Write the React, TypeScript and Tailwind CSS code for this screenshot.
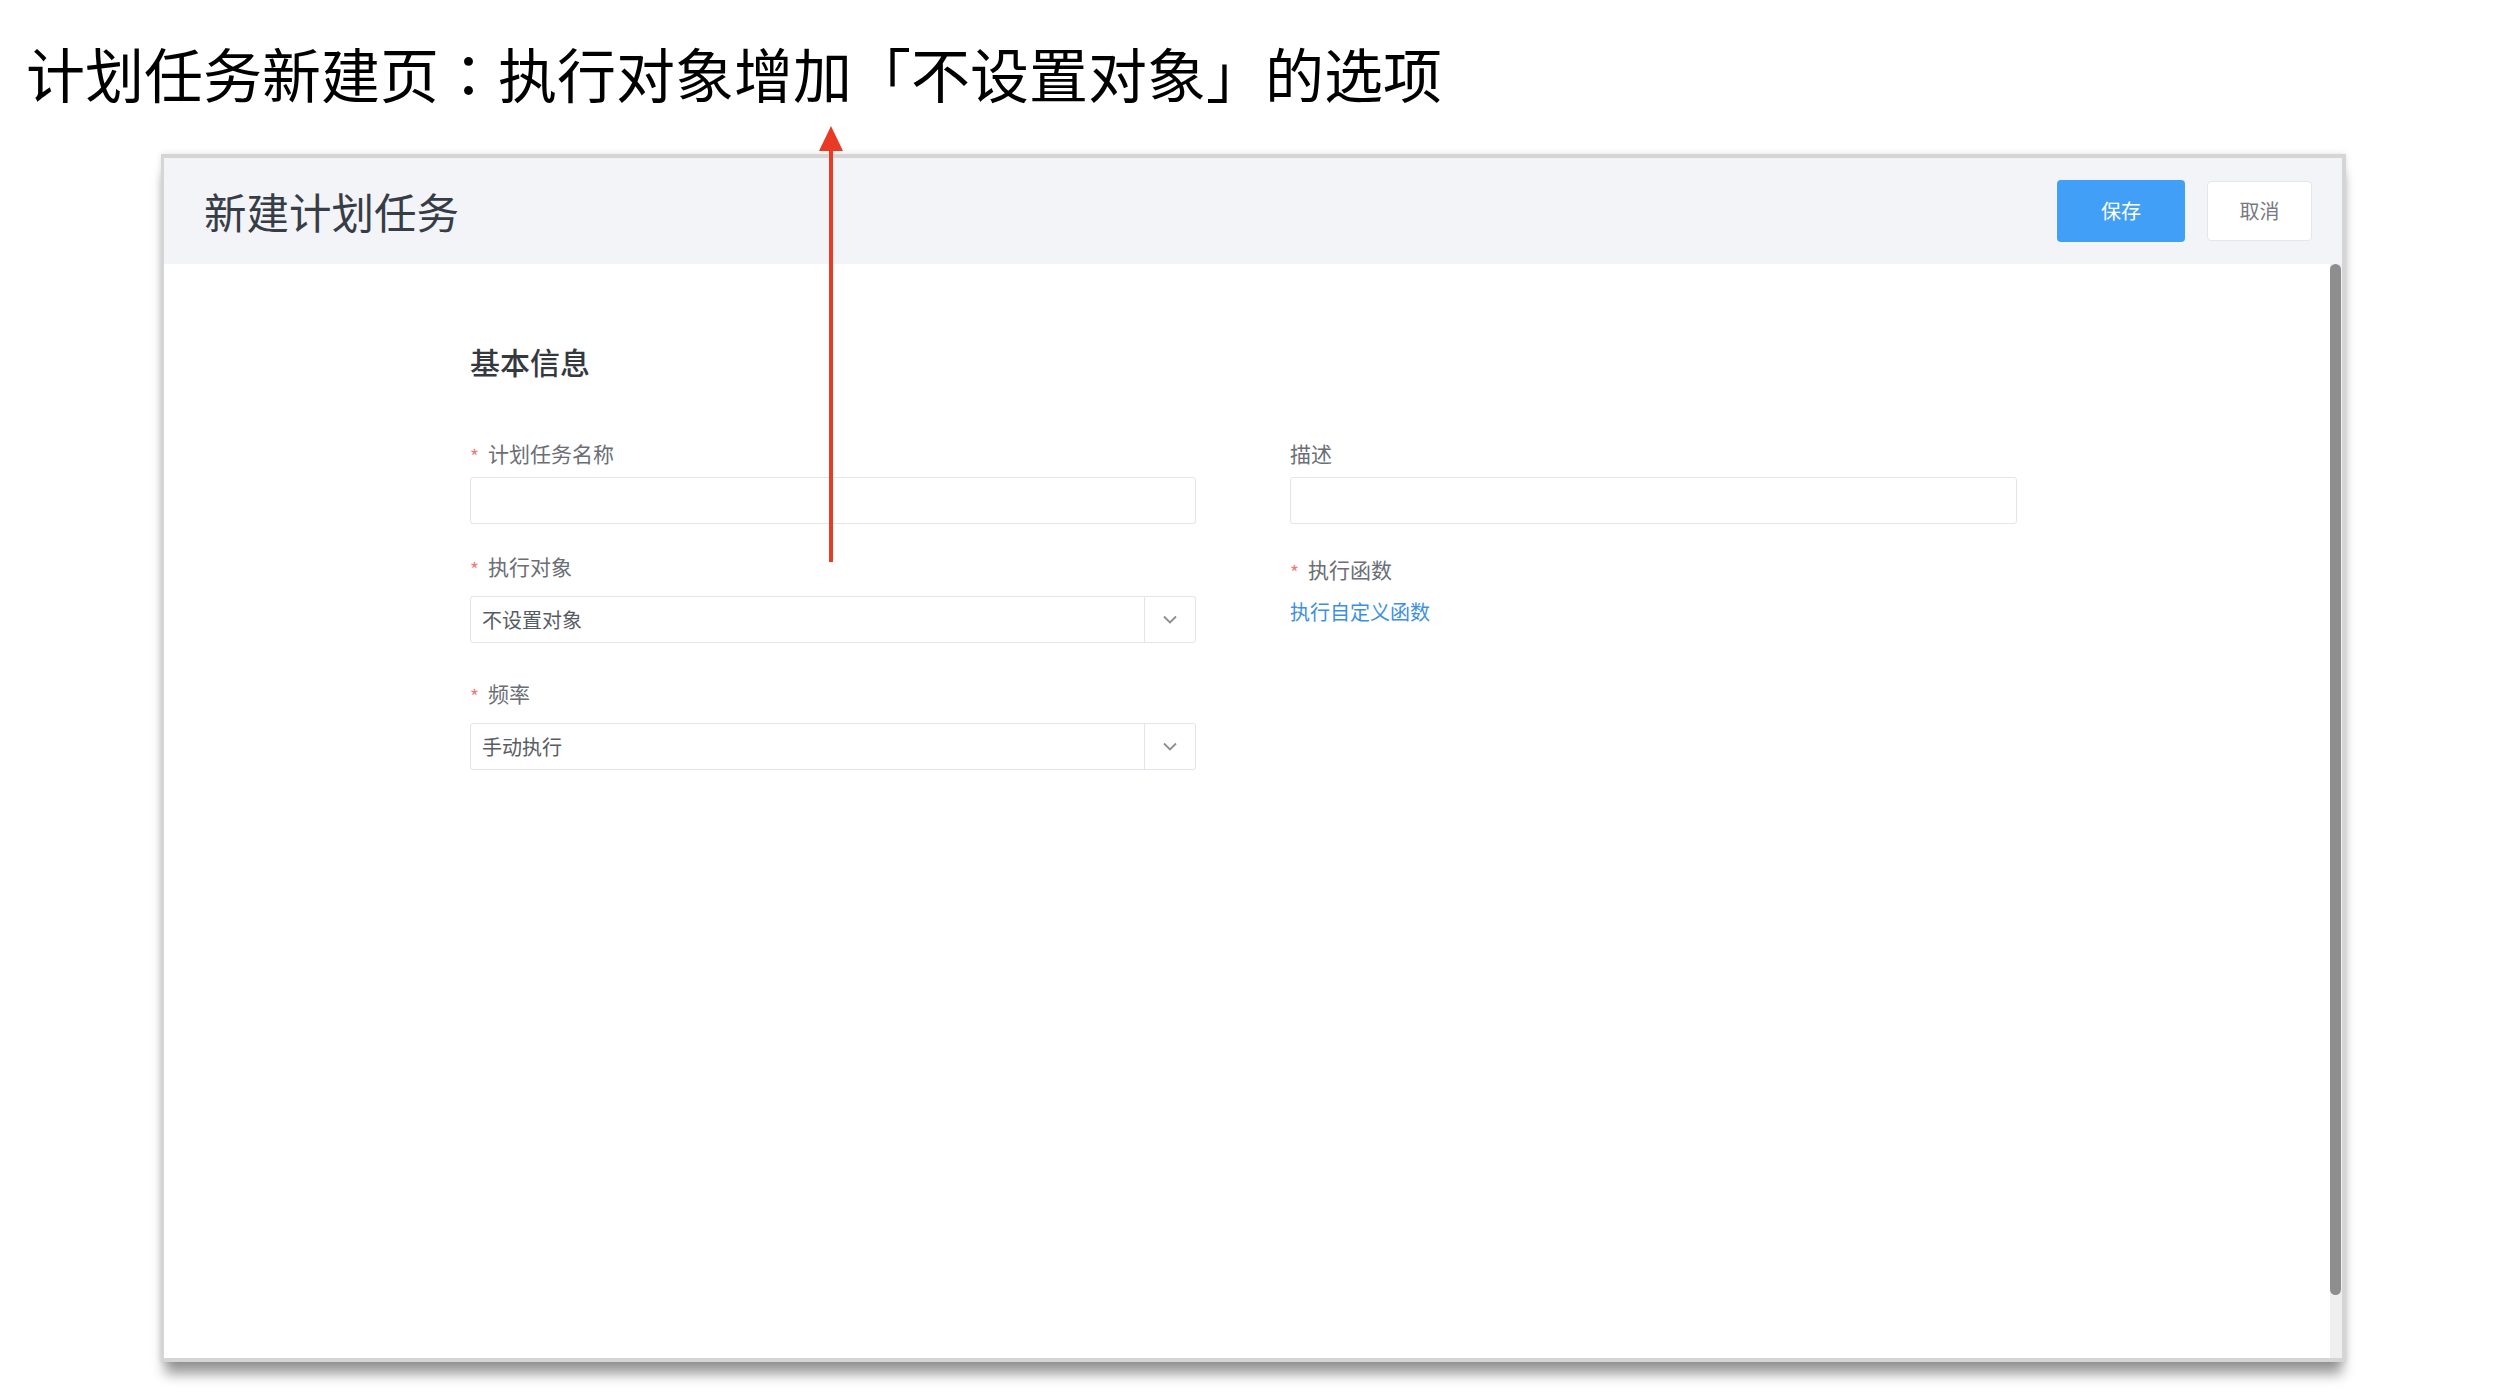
import React from "react";

const cjk = { fontFamily: '"Noto Sans CJK SC", "Noto Sans", sans-serif' };

function Label({ text, required }: { text: string; required?: boolean }) {
  return (
    <div className="flex items-center h-[21px] leading-[21px] text-[21px] text-[#6a6e75]">
      {required ? (
        <span className="w-[18px] pt-[4px] text-[19px] text-[#f07a7a] leading-none">*</span>
      ) : null}
      <span>{text}</span>
    </div>
  );
}

function TextInput() {
  return <div className="h-[47px] w-full rounded-[3px] border border-[#e2e5eb] bg-white" />;
}

function Select({ value }: { value: string }) {
  return (
    <div className="flex h-[47px] w-full items-stretch rounded-[3px] border border-[#e2e5eb] bg-white">
      <div className="flex flex-1 items-center pl-[11px] text-[20px] text-[#585c63]">{value}</div>
      <div className="flex w-[51px] items-center justify-center border-l border-[#e2e5eb]">
        <svg width="14" height="9" viewBox="0 0 14 9" fill="none">
          <path d="M1 1.5 L7 7.5 L13 1.5" stroke="#8a8d93" strokeWidth="1.8" />
        </svg>
      </div>
    </div>
  );
}

export default function App() {
  return (
    <div className="relative w-[2504px] h-[1396px] bg-white overflow-hidden" style={cjk}>
      <h1 className="pl-[26px] pt-[43px] text-[59px] leading-none font-normal text-black whitespace-nowrap">
        计划任务新建页
        <span className="font-['Noto_Sans_CJK_TC',sans-serif]">：</span>
        执行对象增加「不设置对象」的选项
      </h1>

      <div className="ml-[161px] mt-[52px] flex h-[1208px] w-[2185px] flex-col border-[4px] border-l-[3px] border-[#d5d5d5] bg-white shadow-[0_16px_12px_-4px_rgba(0,0,0,0.4),0_0_6px_rgba(0,0,0,0.12)]">
        <div className="flex h-[106px] items-center justify-between bg-[#f3f4f7] pl-[40px] pr-[30px]">
          <div className="text-[42.5px] text-[#373d47]">新建计划任务</div>
          <div className="flex items-center gap-[22px]">
            <button className="h-[62px] w-[128px] rounded-[4px] bg-[#429ff7] text-[20px] text-white">
              保存
            </button>
            <button className="h-[60px] w-[105px] rounded-[4px] border border-[#e4e6ea] bg-white text-[20px] text-[#777a80]">
              取消
            </button>
          </div>
        </div>

        <div className="flex flex-1">
          <div className="flex-1 pl-[306px] pt-[82px]">
            <div className="text-[30px] leading-[30px] font-medium text-[#35393f]">基本信息</div>

            <div className="mt-[67px] grid grid-cols-[726px_727px] gap-x-[94px]">
              <div className="flex flex-col">
                <Label text="计划任务名称" required />
                <div className="mt-[13px]">
                  <TextInput />
                </div>
                <div className="mt-[32px]">
                  <Label text="执行对象" required />
                </div>
                <div className="mt-[19px]">
                  <Select value="不设置对象" />
                </div>
                <div className="mt-[40px]">
                  <Label text="频率" required />
                </div>
                <div className="mt-[19px]">
                  <Select value="手动执行" />
                </div>
              </div>

              <div className="flex flex-col">
                <Label text="描述" />
                <div className="mt-[13px]">
                  <TextInput />
                </div>
                <div className="mt-[35px]">
                  <Label text="执行函数" required />
                </div>
                <div className="mt-[22px] text-[20px] leading-[20px] text-[#3d8fe3]">执行自定义函数</div>
              </div>
            </div>
          </div>

          <div className="flex w-[12px] flex-col bg-[#efefef]">
            <div className="h-[1031px] w-[11px] rounded-full bg-[#8e8e8e]" />
          </div>
        </div>
      </div>

      <svg
        className="absolute left-[819px] top-[126px]"
        width="24"
        height="436"
        viewBox="0 0 24 436"
      >
        <polygon points="12,0 0,25 24,25" fill="#e83a25" />
        <rect x="10" y="24" width="4" height="412" fill="#e83a25" />
      </svg>
    </div>
  );
}
